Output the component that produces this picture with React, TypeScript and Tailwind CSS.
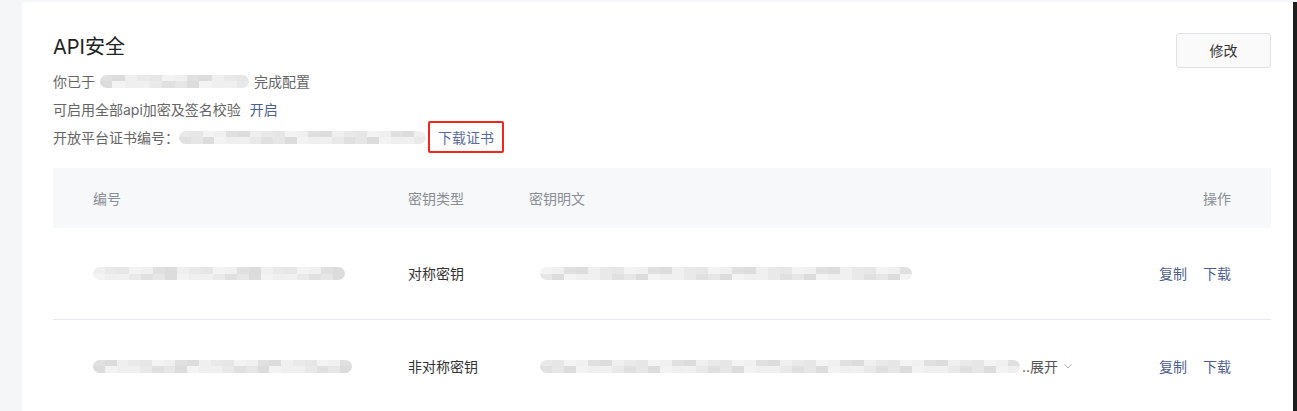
import React from "react";

// mosaic placeholder for the blurred (redacted) values
const shades = [
  "bg-[#e6e6e6]",
  "bg-[#efefef]",
  "bg-[#e0e0e0]",
  "bg-[#f3f3f3]",
  "bg-[#e9e9e9]",
  "bg-[#dcdcdc]",
  "bg-[#f0f0f0]",
];

const Mosaic = ({ width, seed = 1, className = "" }: { width: number; seed?: number; className?: string }) => {
  const count = Math.round(width / 12);
  return (
    <div
      className={`flex h-[13px] shrink-0 overflow-hidden rounded-full blur-[0.6px] ${className}`}
      style={{ width }}
    >
      {Array.from({ length: count }).map((_, i) => (
        <div key={i} className="flex flex-1 flex-col">
          <div className={`flex-1 ${shades[(i * 3 + seed) % shades.length]}`} />
          <div className={`flex-1 ${shades[(i * 5 + seed * 2 + 1) % shades.length]}`} />
        </div>
      ))}
    </div>
  );
};

const rows = [
  { idW: 252, type: "对称密钥", keyW: 372, expand: false },
  { idW: 259, type: "非对称密钥", keyW: 480, expand: true },
];

const App = () => {
  return (
    <div className="flex h-[411px] w-[1297px] overflow-hidden bg-[#f5f6f8] pl-[22px] pt-[2px] font-['Inter','Noto_Sans_CJK_SC',sans-serif] text-[14px]">
      <div className="flex-1 rounded-tl-[4px] bg-white pl-[31px] pr-[22px] pt-[31px]">
        <div className="flex justify-between">
          <div>
            <h2 className="text-[20px] leading-[28px] text-[#222]">API安全</h2>
            <div className="mt-[6px] text-[#666]">
              <div className="flex h-[28px] items-center">
                <span>你已于</span>
                <Mosaic width={149} seed={2} className="ml-[5px] mr-[5px]" />
                <span>完成配置</span>
              </div>
              <div className="flex h-[28px] items-center">
                <span>可启用全部api加密及签名校验</span>
                <a className="ml-[9px] cursor-pointer text-[#4a5e92]">开启</a>
              </div>
              <div className="flex h-[28px] items-center">
                <span>开放平台证书编号：</span>
                <Mosaic width={247} seed={4} />
                <span className="ml-[2px] flex h-[32px] items-center rounded-[2px] border-2 border-[#f2261d] px-[8px] text-[#5a6b99]">
                  下载证书
                </span>
              </div>
            </div>
          </div>
          <button className="h-[35px] w-[95px] rounded-[3px] border border-[#dfe2e7] bg-[#fafafa] text-[14px] text-[#333]">
            修改
          </button>
        </div>

        <div className="mt-[17px]">
          <div className="grid h-[60px] grid-cols-[315px_121px_1fr_auto] items-center bg-[#f7f8fa] px-[40px] text-[#8a8e96]">
            <span>编号</span>
            <span>密钥类型</span>
            <span>密钥明文</span>
            <span>操作</span>
          </div>
          {rows.map((r, i) => (
            <div
              key={i}
              className={`grid h-[92px] grid-cols-[315px_121px_1fr_auto] items-center px-[40px] text-[#333] ${
                i === 0 ? "border-b border-[#e8e9ee]" : ""
              }`}
            >
              <Mosaic width={r.idW} seed={i + 1} />
              <span>{r.type}</span>
              <div className="flex items-center pl-[11px]">
                <Mosaic width={r.keyW} seed={i + 3} />
                {r.expand && (
                  <span className="ml-[2px] flex items-center text-[#555]">
                    ..展开
                    <svg width="10" height="10" viewBox="0 0 10 10" className="ml-[5px]">
                      <path d="M1.5 3.5 L5 7 L8.5 3.5" fill="none" stroke="#aaa" strokeWidth="1" />
                    </svg>
                  </span>
                )}
              </div>
              <div className="flex gap-[16px] text-[#4f5f8f]">
                <a className="cursor-pointer">复制</a>
                <a className="cursor-pointer">下载</a>
              </div>
            </div>
          ))}
        </div>
      </div>
      <div className="w-[4px] bg-[#1e1e1e]" />
    </div>
  );
};

export default App;
